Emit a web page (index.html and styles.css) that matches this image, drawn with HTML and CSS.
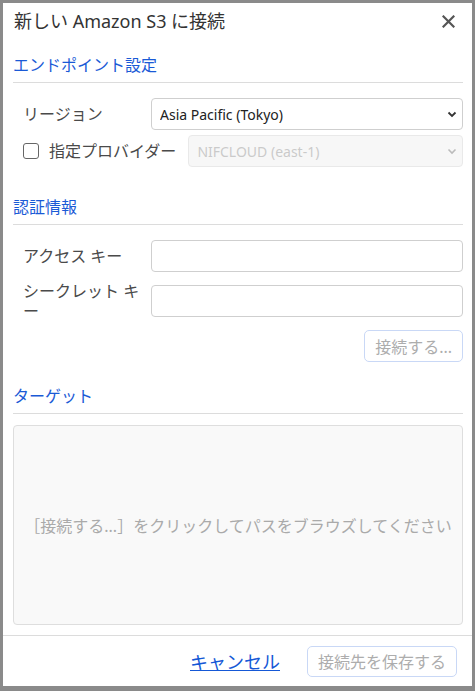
FILE: index.html
```html
<!doctype html>
<html lang="ja">
<head>
  <meta charset="UTF-8">
  <title>新しい Amazon S3 に接続</title>
  <link rel="stylesheet" href="styles.css">
</head>
<body>
  <div class="dialog">
    <div class="dialog-header">
      <span class="dialog-title">新しい Amazon S3 に接続</span>
      <button type="button" class="close" aria-label="閉じる">
        <svg width="13" height="13" viewBox="0 0 13 13"><path d="M1.5 1.5 L11.5 11.5 M11.5 1.5 L1.5 11.5" stroke="#555" stroke-width="2.2" stroke-linecap="square"/></svg>
      </button>
    </div>

    <div class="dialog-body">
      <h2 class="section-title first">エンドポイント設定</h2>
      <div class="row">
        <label class="row-label" for="region">リージョン</label>
        <div class="select-wrap">
          <select id="region">
            <option>Asia Pacific (Tokyo)</option>
          </select>
          <svg class="chevron" width="10" height="7" viewBox="0 0 10 7"><path d="M1.5 1.5 L5 5 L8.5 1.5" fill="none" stroke="#333" stroke-width="1.8"/></svg>
        </div>
      </div>
      <div class="row row-check">
        <label class="check-label"><input type="checkbox"> 指定プロバイダー</label>
        <div class="select-wrap disabled">
          <select disabled>
            <option>NIFCLOUD (east-1)</option>
          </select>
          <svg class="chevron" width="10" height="7" viewBox="0 0 10 7"><path d="M1.5 1.5 L5 5 L8.5 1.5" fill="none" stroke="#bbb" stroke-width="1.6"/></svg>
        </div>
      </div>

      <h2 class="section-title auth">認証情報</h2>
      <div class="row">
        <label class="row-label" for="access">アクセス キー</label>
        <input type="text" id="access">
      </div>
      <div class="row row-secret">
        <label class="row-label" for="secret">シークレット キー</label>
        <input type="password" id="secret">
      </div>
      <div class="actions">
        <button type="button" class="btn" disabled>接続する...</button>
      </div>

      <h2 class="section-title target">ターゲット</h2>
      <div class="browse-box">［接続する...］をクリックしてパスをブラウズしてください</div>
    </div>

    <div class="dialog-footer">
      <a href="#" class="cancel">キャンセル</a>
      <button type="button" class="btn btn-save" disabled>接続先を保存する</button>
    </div>
  </div>
</body>
</html>
```

FILE: styles.css
```css
body {
  margin: 0;
  padding: 3px;
  background: #8a8a8a;
  font-family: "Noto Sans", "Noto Sans CJK JP", sans-serif;
  color: #333;
}
.dialog {
  width: 469px;
  height: 683px;
  background: #fff;
  display: flex;
  flex-direction: column;
  box-sizing: border-box;
}
.dialog-header {
  height: 36px;
  display: flex;
  align-items: center;
  justify-content: space-between;
  padding: 0 17px 0 11px;
}
.dialog-title {
  font-size: 18px;
  line-height: 24px;
  color: #333;
}
.close {
  border: none;
  background: none;
  padding: 0;
  display: flex;
  cursor: pointer;
}
.dialog-body {
  flex: 1;
  padding: 0 9px 0 10px;
}
.section-title {
  margin: 0;
  font-weight: normal;
  font-size: 16px;
  line-height: 24px;
  color: #1a5ad6;
  padding-bottom: 5px;
  border-bottom: 1px solid #dcdcdc;
}
.section-title.first { margin-top: 14px; }
.section-title.auth { margin-top: 28px; }
.section-title.target { margin-top: 22px; }
.row {
  display: flex;
  align-items: center;
  padding-left: 10px;
  margin-top: 15px;
}
.row-check { margin-top: 5px; }
.row-secret { margin-top: 9px; }
.row-label {
  width: 120px;
  margin-right: 8px;
  font-size: 16px;
  line-height: 20px;
  color: #4a4a4a;
}
.check-label {
  display: flex;
  align-items: center;
  font-size: 16px;
  line-height: 20px;
  color: #4a4a4a;
  margin-right: 12px;
  white-space: nowrap;
}
input[type="checkbox"] {
  appearance: none;
  width: 16px;
  height: 16px;
  margin: 0 10px 0 0;
  border: 1px solid #666;
  border-radius: 3px;
  background: #fff;
}
.select-wrap {
  position: relative;
  flex: 1;
}
select {
  appearance: none;
  width: 100%;
  height: 32px;
  padding: 0 28px 0 8px;
  border: 1px solid #cfcfcf;
  border-radius: 4px;
  background: #fff;
  font-family: inherit;
  font-size: 14px;
  color: #222;
}
.select-wrap.disabled select {
  background: #f4f4f4;
  border-color: #e0e0e0;
  color: #b4b4b4;
}
.chevron {
  position: absolute;
  right: 6px;
  top: 13px;
  pointer-events: none;
}
input[type="text"], input[type="password"] {
  flex: 1;
  height: 32px;
  box-sizing: border-box;
  border: 1px solid #cfcfcf;
  border-radius: 4px;
  background: #fff;
}
.actions {
  display: flex;
  justify-content: flex-end;
  margin-top: 9px;
}
.btn {
  height: 32px;
  padding: 0 10px;
  border: 1px solid #c9d8f6;
  border-radius: 5px;
  background: #fff;
  font-family: inherit;
  font-size: 16px;
  color: #adadad;
}
.browse-box {
  margin-top: 11px;
  height: 200px;
  box-sizing: border-box;
  border: 1px solid #dedede;
  border-radius: 4px;
  background: #f9f9f9;
  display: flex;
  align-items: center;
  justify-content: center;
  font-size: 16px;
  color: #aaa;
}
.dialog-footer {
  margin-top: 10px;
  border-top: 1px solid #dcdcdc;
  height: 50px;
  display: flex;
  align-items: center;
  justify-content: flex-end;
  gap: 27px;
  padding-right: 15px;
}
.cancel {
  font-size: 18px;
  color: #1558d6;
  text-decoration: underline;
}
.btn-save {
  width: 150px;
  height: 31px;
}
```
